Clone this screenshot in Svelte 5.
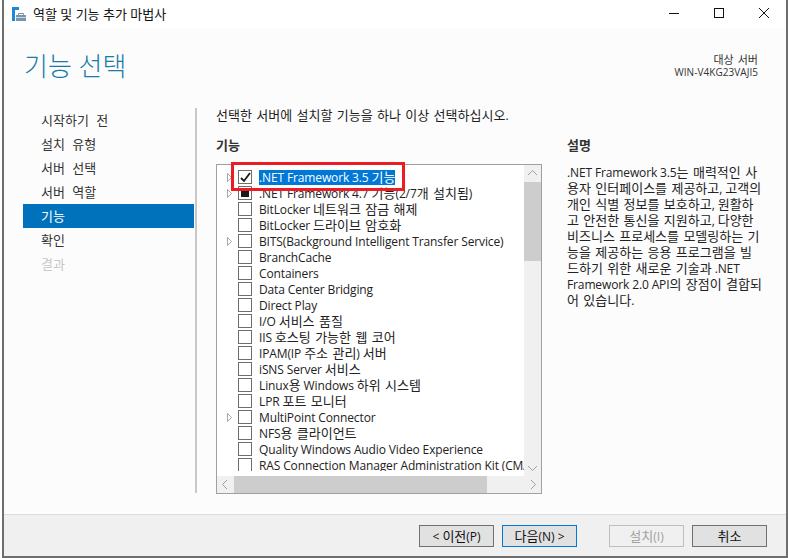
<script lang="ts">
	// hangul is set a size up: Noto's hangul advance is narrower than the latin text around it
	function runs(text: string) {
		return text.match(/[\uac00-\ud7a3]+(?: [\uac00-\ud7a3]+)*|[^\uac00-\ud7a3]+/g) ?? [];
	}

	const steps = ['시작하기 전', '설치 유형', '서버 선택', '서버 역할', '기능', '확인', '결과'];

	const features = [
		{ name: '.NET Framework 3.5 기능', arrow: true, state: 'checked', selected: true },
		{ name: '.NET Framework 4.7 기능(2/7개 설치됨)', arrow: true, state: 'partial' },
		{ name: 'BitLocker 네트워크 잠금 해제' },
		{ name: 'BitLocker 드라이브 암호화' },
		{ name: 'BITS(Background Intelligent Transfer Service)', arrow: true },
		{ name: 'BranchCache' },
		{ name: 'Containers' },
		{ name: 'Data Center Bridging' },
		{ name: 'Direct Play' },
		{ name: 'I/O 서비스 품질' },
		{ name: 'IIS 호스팅 가능한 웹 코어' },
		{ name: 'IPAM(IP 주소 관리) 서버' },
		{ name: 'iSNS Server 서비스' },
		{ name: 'Linux용 Windows 하위 시스템' },
		{ name: 'LPR 포트 모니터' },
		{ name: 'MultiPoint Connector', arrow: true },
		{ name: 'NFS용 클라이언트' },
		{ name: 'Quality Windows Audio Video Experience' },
		{ name: 'RAS Connection Manager Administration Kit (CMAK)' }
	];

	const description = [
		'.NET Framework 3.5는 매력적인 사',
		'용자 인터페이스를 제공하고, 고객의',
		'개인 식별 정보를 보호하고, 원활하',
		'고 안전한 통신을 지원하고, 다양한',
		'비즈니스 프로세스를 모델링하는 기',
		'능을 제공하는 응용 프로그램을 빌',
		'드하기 위한 새로운 기술과 .NET',
		'Framework 2.0 API의 장점이 결합되',
		'어 있습니다.'
	];
</script>

{#snippet mixed(text: string)}
	{#each runs(text) as run}<span class={/[\uac00-\ud7a3]/.test(run) ? 'ko' : ''}>{run}</span>{/each}
{/snippet}

<div class="window">
	<header class="titlebar">
		<svg class="app-icon" width="14" height="14" viewBox="0 0 14 14">
			<rect x="0" y="0" width="3" height="14" fill="#1e88d8" />
			<rect x="0" y="0" width="7" height="3" fill="#1e88d8" />
			<rect x="4" y="8" width="10" height="6" fill="#7a95aa" />
			<path d="M6.500 8V6.500h5V8" fill="none" stroke="#7a95aa" />
			<rect x="4" y="10" width="10" height="1" fill="#c9d6df" />
		</svg>
		<span class="title">역할 및 기능 추가 마법사</span>
		<div class="controls">
			<svg width="14" height="14" viewBox="0 0 14 14"><path d="M2 7.5h10" stroke="#111" /></svg>
			<svg width="14" height="14" viewBox="0 0 14 14"><rect x="2.5" y="2.5" width="9" height="9" fill="none" stroke="#111" /></svg>
			<svg width="14" height="14" viewBox="0 0 14 14"><path d="M2 2l10 10M12 2L2 12" stroke="#111" /></svg>
		</div>
	</header>

	<div class="content">
		<div class="head">
			<h1>기능 선택</h1>
			<div class="target">
				<div class="target-label">대상 서버</div>
				<div>WIN-V4KG23VAJI5</div>
			</div>
		</div>

		<div class="body">
			<nav class="steps">
				{#each steps as step, i}
					<div class="step" class:active={i === 4} class:disabled={i === 6}>{step}</div>
				{/each}
			</nav>

			<main class="main">
				<p class="intro">{@render mixed('선택한 서버에 설치할 기능을 하나 이상 선택하십시오.')}</p>
				<div class="columns">
					<section class="features">
						<h2>기능</h2>
						<div class="listbox">
							<div class="list-top">
								<div class="rows-wrap">
									<div class="rows">
										{#each features as item}
											<div class="row">
												<span class="arrow">
													{#if item.arrow}
														<svg width="7" height="9" viewBox="0 0 7 9"><path d="M1.5 .5l4 4-4 4z" fill="#fff" stroke="#a6a6a6" /></svg>
													{/if}
												</span>
												<span class="check">
													{#if item.state === 'checked'}
														<svg width="11" height="11" viewBox="0 0 11 11"><path d="M1 6l3 3 6-8" fill="none" stroke="#1a1a1a" stroke-width="1.8" /></svg>
													{:else if item.state === 'partial'}
														<span class="partial"></span>
													{/if}
												</span>
												<span class="name" class:selected={item.selected}>{@render mixed(item.name)}</span>
											</div>
										{/each}
									</div>
								</div>
								<div class="vscroll">
									<svg width="17" height="17" viewBox="0 0 17 17"><path d="M4 10l4.5-4.5L13 10" fill="none" stroke="#a0a0a0" /></svg>
									<div class="vtrack"><div class="vthumb"></div></div>
									<svg width="17" height="17" viewBox="0 0 17 17"><path d="M4 7l4.5 4.5L13 7" fill="none" stroke="#a0a0a0" /></svg>
								</div>
							</div>
							<div class="hscroll">
								<svg width="17" height="17" viewBox="0 0 17 17"><path d="M10 4L5.5 8.5 10 13" fill="none" stroke="#a0a0a0" /></svg>
								<div class="htrack"><div class="hthumb"></div></div>
								<svg width="17" height="17" viewBox="0 0 17 17"><path d="M7 4l4.500 4.500L7 13" fill="none" stroke="#a0a0a0" /></svg>
							</div>
							<div class="highlight"></div>
						</div>
					</section>

					<aside class="desc">
						<h2>설명</h2>
						<p>
							{#each description as line}
								<span class="line">{@render mixed(line)}</span>
							{/each}
						</p>
					</aside>
				</div>
			</main>
		</div>
	</div>

	<footer class="footer">
		<button class="btn">{@render mixed('< 이전(P)')}</button>
		<button class="btn next">{@render mixed('다음(N) >')}</button>
		<button class="btn install" disabled>{@render mixed('설치(I)')}</button>
		<button class="btn">{@render mixed('취소')}</button>
	</footer>
</div>

<style>
	:global(body) {
		margin: 0;
		background: #fff;
	}

	.window {
		width: 786px;
		height: 558px;
		margin-left: 2px;
		box-sizing: border-box;
		border: 2px solid #6e6e6e;
		border-top: none;
		display: flex;
		flex-direction: column;
		font-family: 'Open Sans', 'Noto Sans CJK KR', sans-serif;
		font-size: 12px;
		letter-spacing: -.13px;
		color: #1e1e1e;
		background: #fcfcfc;
		overflow: hidden;
	}

	.ko {
		font-size: 13px;
		letter-spacing: 0;
		word-spacing: 1px;
	}

	.titlebar {
		height: 28px;
		flex: none;
		display: flex;
		align-items: center;
		background: #fff;
		padding-left: 8px;
	}

	.title {
		margin: -2px 0 0 7px;
		font-size: 13px;
		letter-spacing: 0;
		color: #111;
	}

	.app-icon {
		margin-top: -1px;
	}

	.controls {
		margin-left: auto;
		display: flex;
		gap: 31px;
		padding-right: 15px;
		margin-top: -2px;
	}

	.controls svg {
		display: block;
	}

	.content {
		flex: 1;
		min-height: 0;
		display: flex;
		flex-direction: column;
	}

	.head {
		height: 72px;
		flex: none;
		display: flex;
		justify-content: space-between;
		padding: 0 0 0 20px;
	}

	h1 {
		margin: 20px 0 0;
		font-size: 26px;
		line-height: 36px;
		font-weight: 300;
		color: #1a7aa8;
		letter-spacing: 0;
	}

	.target {
		margin: 25px 28px 0 0;
		text-align: right;
		font-size: 10px;
		line-height: 13px;
		letter-spacing: .05px;
		color: #333;
	}

	.target-label {
		font-size: 11px;
		word-spacing: 1px;
	}

	.body {
		display: flex;
		flex: 1;
		min-height: 0;
	}

	.steps {
		width: 171px;
		margin-left: 19px;
		margin-top: 8px;
		flex: none;
	}

	.step {
		height: 24px;
		line-height: 24px;
		padding-left: 18px;
		font-size: 13px;
		letter-spacing: 0;
		word-spacing: 4px;
		color: #333;
	}

	.step.active {
		background: #0072bc;
		color: #fff;
	}

	.step.disabled {
		color: #c8c8c8;
	}

	.main {
		margin: 8px 0 21px 1px;
		border-left: 2px solid #c8c8c8;
		padding-left: 19px;
		flex: 1;
		min-width: 0;
	}

	.intro {
		margin: 0;
		height: 28px;
		line-height: 14px;
	}

	.columns {
		display: flex;
	}

	h2 {
		margin: 0 0 10px;
		font-size: 13px;
		line-height: 18px;
		font-weight: 700;
		letter-spacing: 0;
		color: #333;
	}

	.features {
		width: 326px;
		flex: none;
	}

	.listbox {
		position: relative;
		height: 330px;
		box-sizing: border-box;
		border: 1px solid #a0a0a0;
		background: #fff;
		display: flex;
		flex-direction: column;
	}

	.list-top {
		flex: 1;
		min-height: 0;
		display: flex;
	}

	/* rows stop short of the horizontal scrollbar, leaving a white strip */
	.rows-wrap {
		flex: 1;
		min-width: 0;
		padding: 4px 0 5px;
		display: flex;
	}

	.rows {
		flex: 1;
		min-width: 0;
		overflow: hidden;
	}

	.row {
		height: 16px;
		display: flex;
		align-items: center;
		white-space: nowrap;
	}

	.arrow {
		width: 21px;
		padding-left: 9px;
		box-sizing: border-box;
		flex: none;
		display: flex;
	}

	.check {
		width: 14px;
		height: 14px;
		box-sizing: border-box;
		flex: none;
		border: 1px solid #6e6e6e;
		background: #fff;
		display: flex;
		align-items: center;
		justify-content: center;
	}

	.partial {
		width: 8px;
		height: 8px;
		background: #1a1a1a;
	}

	.name {
		margin-left: 7px;
		line-height: 15px;
		color: #222;
	}

	.name.selected {
		background: #0078d7;
		color: #fff;
	}

	.vscroll {
		width: 17px;
		flex: none;
		display: flex;
		flex-direction: column;
		background: #f0f0f0;
	}

	.vtrack {
		flex: 1;
		min-height: 0;
	}

	.vthumb {
		height: 79px;
		background: #cdcdcd;
	}

	.hscroll {
		height: 17px;
		flex: none;
		display: flex;
		background: #f0f0f0;
	}

	.htrack {
		flex: 1;
		min-width: 0;
	}

	.hthumb {
		width: 253px;
		height: 100%;
		background: #cdcdcd;
	}

	/* red annotation drawn over the first row */
	.highlight {
		position: absolute;
		left: 14px;
		top: -3px;
		width: 174px;
		height: 29px;
		box-sizing: border-box;
		border: 3px solid #ed1c24;
	}

	.desc {
		margin-left: 25px;
		width: 200px;
		flex: none;
	}

	.desc p {
		margin: 0;
		color: #222;
		white-space: nowrap;
	}

	.line {
		display: block;
		line-height: 16px;
		height: 16px;
	}

	.footer {
		height: 42px;
		flex: none;
		box-sizing: border-box;
		border-top: 1px solid #dcdcdc;
		background: #f0f0f0;
		display: flex;
		align-items: flex-start;
		padding: 10px 17px 0 415px;
	}

	.btn {
		width: 75px;
		height: 22px;
		padding: 0;
		box-sizing: border-box;
		border: 1px solid #707070;
		background: #e1e1e1;
		font: inherit;
		color: #111;
		line-height: 18px;
	}

	.next {
		margin-left: 8px;
		border-color: #0078d7;
	}

	.install {
		margin-left: 32px;
		margin-right: 8px;
		border-color: #bfbfbf;
		background: #f0f0f0;
		color: #a0a0a0;
	}
</style>
